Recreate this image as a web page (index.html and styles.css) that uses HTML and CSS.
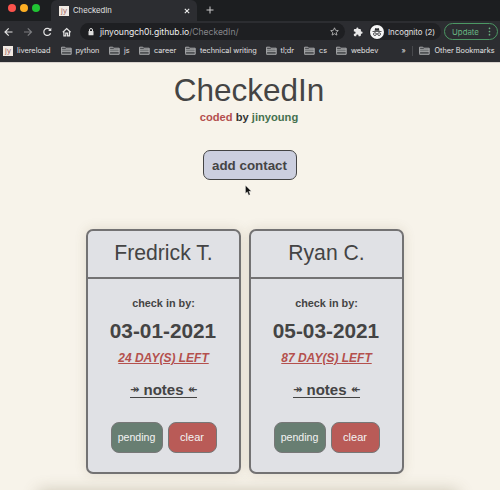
FILE: index.html
```html
<!DOCTYPE html>
<html lang="en">
<head>
<meta charset="utf-8">
<title>CheckedIn</title>
<link rel="stylesheet" href="styles.css">
</head>
<body>
<svg width="0" height="0" class="defs">
  <symbol id="folder" viewBox="0 0 11 9"><path d="M.6 7.3V1.2h3.2l1 1h5.400v6.100H.6zM.6 3.800h9.600M.6 5.300h9.600" fill="#85868a" fill-opacity=".4" stroke="#b4b5b7" stroke-width=".9"/></symbol>
</svg>
<header class="browser">
  <div class="tabs">
    <div class="lights"><i class="red"></i><i class="amber"></i><i class="green"></i></div>
    <div class="tab"><span class="fav">jy</span><span class="tab-name">CheckedIn</span>
      <svg width="6" height="6" viewBox="0 0 6 6"><path d="M.8.8l4.400 4.400M5.200.8L.8 5.200" stroke="#eee" stroke-width="1.1"/></svg></div>
    <svg class="plus" width="8" height="8" viewBox="0 0 8 8"><path d="M4 .5v7M.5 4h7" stroke="#ccc" stroke-width="1"/></svg>
  </div>
  <div class="toolbar">
    <svg class="nav" width="70" height="12" viewBox="0 0 70 12" fill="none" stroke="#e4e4e4" stroke-width="1.2">
      <path d="M8.5 6H1.2M4.7 2.3L1 6l3.7 3.7"/>
      <path d="M20 6h7.3M23.8 2.3L27.500 6l-3.700 3.700" stroke="#7c7d80"/>
      <path d="M46 3.700A3.500 3.500 0 1 0 46.600 7.200"/><path d="M47.300 1.800v3.200h-3.200z" fill="#e4e4e4" stroke="none"/>
      <path d="M58.800 6.200l3.900-3.700 3.900 3.700M59.900 5.500v4.300h1.900V7.200h1.800v2.600h1.900V5.500"/>
    </svg>
    <div class="address">
      <svg width="6" height="8" viewBox="0 0 6 8"><path d="M1.500 3.500V2a1.500 1.500 0 0 1 3 0v1.500" fill="none" stroke="#ddd"/><rect x=".5" y="3" width="5" height="4.300" rx=".6" fill="#ddd"/></svg>
      <span class="url">jinyoungch0i.github.io<span>/CheckedIn/</span></span>
      <svg class="star" width="9" height="9" viewBox="0 0 9 9"><path d="M4.500.8l1.100 2.500 2.700.3-2 1.800.6 2.700-2.400-1.400-2.400 1.400.6-2.700-2-1.800 2.700-.3z" fill="none" stroke="#bbb" stroke-width=".85"/></svg>
    </div>
    <svg class="puzzle" width="10" height="10" viewBox="0 0 24 24"><path fill="#e8e8e8" d="M20.500 11H19V7a2 2 0 0 0-2-2h-4V3.500a2.500 2.500 0 0 0-5 0V5H4a2 2 0 0 0-2 2v3.800h1.500a2.700 2.700 0 0 1 0 5.400H2V20a2 2 0 0 0 2 2h3.800v-1.500a2.700 2.700 0 0 1 5.400 0V22H17a2 2 0 0 0 2-2v-4h1.500a2.500 2.500 0 0 0 0-5z"/></svg>
    <div class="incognito">
      <svg width="14" height="14" viewBox="0 0 14 14"><circle cx="7" cy="7" r="7" fill="#f5f5f5"/><path d="M4.500 5.700l.8-2.700 1.700.4 1.700-.4.8 2.700zM2.500 6h9v.8h-9z" fill="#292a2d"/><path d="M6.300 8.900h1.400" stroke="#292a2d" stroke-width=".7"/><circle cx="4.900" cy="9.100" r="1.400" fill="none" stroke="#292a2d" stroke-width=".8"/><circle cx="9.100" cy="9.100" r="1.400" fill="none" stroke="#292a2d" stroke-width=".8"/></svg>
      <span>Incognito (2)</span>
    </div>
    <div class="update"><span>Update</span><svg width="3" height="9" viewBox="0 0 3 9" fill="#69b581"><circle cx="1.500" cy="1.300" r=".85"/><circle cx="1.500" cy="4.500" r=".85"/><circle cx="1.500" cy="7.700" r=".85"/></svg></div>
  </div>
  <nav class="bookmarks">
    <span class="fav">jy</span><span class="bm live">livereload</span>
    <svg class="folder"><use href="#folder"/></svg><span class="bm python">python</span>
    <svg class="folder"><use href="#folder"/></svg><span class="bm js">js</span>
    <svg class="folder"><use href="#folder"/></svg><span class="bm career">career</span>
    <svg class="folder"><use href="#folder"/></svg><span class="bm writing">technical writing</span>
    <svg class="folder"><use href="#folder"/></svg><span class="bm tldr">tl;dr</span>
    <svg class="folder"><use href="#folder"/></svg><span class="bm cs">cs</span>
    <svg class="folder"><use href="#folder"/></svg><span class="bm webdev">webdev</span>
    <span class="more">»</span>
    <svg class="folder"><use href="#folder"/></svg><span class="bm">Other Bookmarks</span>
  </nav>
</header>
<main>
  <h1>CheckedIn</h1>
  <p class="credit"><span class="rose">coded</span> by <span class="leaf">jinyoung</span></p>
  <button class="add">add contact</button>
  <section class="cards">
    <article class="card">
      <h2>Fredrick T.</h2>
      <p class="label">check in by:</p>
      <p class="date">03-01-2021</p>
      <p class="left">24 DAY(S) LEFT</p>
      <p class="notes"><span class="arrow">↠</span><span>notes</span><span class="arrow">↞</span></p>
      <div class="actions"><button class="pending">pending</button><button class="clear">clear</button></div>
    </article>
    <article class="card">
      <h2>Ryan C.</h2>
      <p class="label">check in by:</p>
      <p class="date">05-03-2021</p>
      <p class="left">87 DAY(S) LEFT</p>
      <p class="notes"><span class="arrow">↠</span><span>notes</span><span class="arrow">↞</span></p>
      <div class="actions"><button class="pending">pending</button><button class="clear">clear</button></div>
    </article>
  </section>
  <div class="next-panel"></div>
</main>
<svg class="cursor" width="7" height="11" viewBox="0 0 7 11"><path d="M.5.600v7.900l1.800-1.700 1.400 3.400 1.500-.6-1.400-3.300h2.500z" fill="#111" stroke="#fff" stroke-width=".3"/></svg>
</body>
</html>
```
FILE: styles.css
```css
* { box-sizing: border-box; }
body { margin: 0; width: 500px; height: 490px; overflow: hidden; background: #f7f3ea; color: #444; font-family: "Liberation Sans", Arial, sans-serif; }
svg { display: block; flex: none; }
.defs { position: absolute; }
h1, h2, p { margin: 0; font-weight: normal; white-space: nowrap; }

.browser { height: 62px; background: #2c2d31; color: #e2e2e3; font-family: Inter, sans-serif; white-space: nowrap; }
.tabs { display: flex; height: 21px; background: #1c1e20; }
.lights { display: flex; gap: 4.200px; width: 51px; padding: 4.200px 0 0 7.500px; }
.lights i { width: 8px; height: 8px; border-radius: 50%; }
.red { background: #fb534c; }
.amber { background: #fdaf24; }
.green { background: #20c433; }
.tab { display: flex; align-items: center; width: 146px; height: 21px; padding: 0 7px 0 8px; border-radius: 6px 6px 0 0; background: #2c2d31; font-size: 7.700px; }
.tab { font-size: 7.500px; }
.tab-name { flex: 1; margin-left: 4px; letter-spacing: -.05px; }
.fav { flex: none; width: 10px; height: 10px; background: #f0e9e2; color: #a66e6c; font: 8px/9px "Liberation Sans", sans-serif; text-align: center; }
.tab { font-size: 7.700px; }
.tab-name { letter-spacing: 0; }
.plus { margin: 6px 0 0 9px; }
.toolbar { display: flex; align-items: center; height: 21px; }
.nav { margin-left: 4px; }
.address { display: flex; align-items: center; width: 265px; height: 17px; margin-left: 6px; padding: 0 6px 0 8px; border-radius: 9px; background: #1e1f22; }
.url { flex: 1; margin-left: 6px; font-size: 8.550px; color: #eee; }
.url span { color: #85868a; }
.puzzle { margin-left: 8px; }
.incognito { display: flex; align-items: center; width: 72px; height: 17px; margin-left: 6px; padding-left: 1px; border-radius: 9px; background: #202124; font-size: 7.850px; }
.incognito span { margin-left: 4px; }
.update { display: flex; align-items: center; width: 54px; height: 17px; margin-left: 2.500px; padding: 0 6px 0 7.500px; justify-content: space-between; border: 1px solid #4c9864; border-radius: 9px; color: #69b581; font-size: 7.850px; }
.bookmarks { display: flex; align-items: center; height: 17px; padding-left: 3px; font-size: 7.300px; }
.folder { width: 11px; height: 9px; }
.bm { flex: none; margin-left: 4px; }
.live { width: 43.500px; }
.python { width: 33.500px; }
.js { width: 15px; }
.career { width: 31px; }
.writing { width: 65.500px; }
.tldr { width: 23.500px; }
.cs { width: 17px; }
.webdev { width: 30px; }
.more { flex: none; width: 12px; height: 10px; margin: 0 6px 0 auto; padding-right: 6px; line-height: 9px; border-right: 1px solid #48494d; }
.bookmarks > :last-child { margin-right: 5.500px; }

main { display: flex; flex-direction: column; align-items: center; height: 428px; border-top: 1px solid #d9d3ce; }
main > * { flex: none; }
h1 { margin-top: 9px; width: 498px; text-align: center; font-size: 31.500px; line-height: 36px; }
.credit { width: 498px; text-align: center; margin-top: 2px; font-size: 11.150px; line-height: 14px; font-weight: bold; color: #333; }
h1, .credit { margin-right: 2px; }
button { padding: 0; font-family: inherit; }
.rose { color: #b44f4e; }
.leaf { color: #45704f; }
.add { width: 94px; height: 30px; margin: 26px 1px 0 0; border: 1.500px solid #444; border-radius: 7px; background: #cccfdf; color: #444; font-size: 13.350px; font-weight: bold; }
.cards { display: flex; gap: 8px; margin: 49px 10px 0 0; }
.card { display: flex; flex-direction: column; align-items: center; width: 155px; height: 244.500px; border: 2px solid #737273; border-radius: 7px; background: #e0e1e5; box-shadow: 0 0 12px rgba(110, 95, 60, .17); }
h2 { width: 100%; height: 48px; border-bottom: 2px solid #737273; text-align: center; font-size: 21.200px; line-height: 44px; }
.label { margin-top: 18px; font-size: 10.850px; line-height: 13px; font-weight: bold; }
.date { margin-top: 8px; padding-right: 1px; font-size: 20.800px; line-height: 26px; font-weight: bold; }
.left { margin-top: 7px; color: #b4504d; font-size: 12px; line-height: 14px; font-weight: bold; font-style: italic; text-decoration: underline; }
.notes { display: flex; margin-top: 16px; height: 17px; border-bottom: 1.500px solid #444; font-size: 15px; line-height: 17px; font-weight: bold; gap: 4.500px; }
.arrow { width: 9px; font: bold 11px/18px "DejaVu Sans", sans-serif; }
.actions { display: flex; gap: 5px; margin-top: 24px; }
.actions button { height: 30.500px; border: 1.500px solid #777; border-radius: 8px; color: #f3f3f3; font-size: 10.600px; }
.actions .pending { width: 52px; background: #687e72; }
.actions .clear { width: 49px; background: #b95b57; font-size: 11px; }
.next-panel { width: 420px; height: 20px; margin: 17px 5px 0 0; box-shadow: 0 0 16px rgba(110, 95, 60, .32); }
.cursor { position: absolute; left: 245px; top: 185px; }
```
